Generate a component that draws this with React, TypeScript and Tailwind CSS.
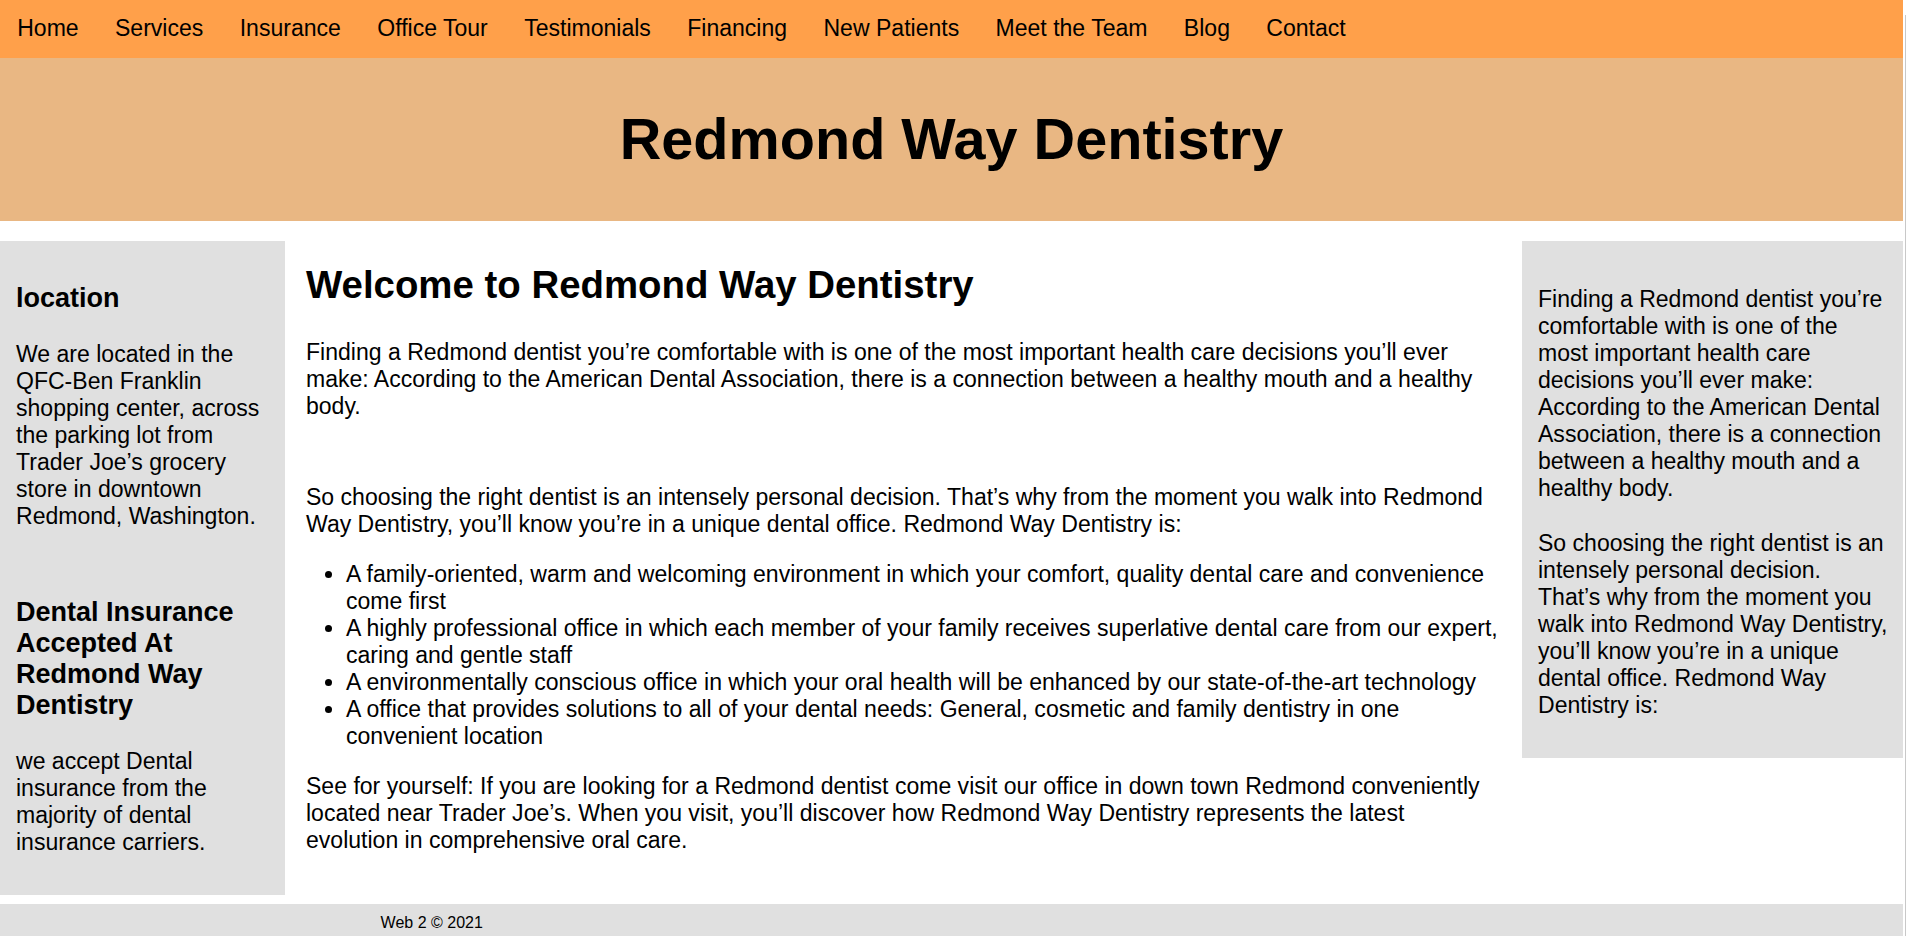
import React from "react";

const navItems = [
  "Home",
  "Services",
  "Insurance",
  "Office Tour",
  "Testimonials",
  "Financing",
  "New Patients",
  "Meet the Team",
  "Blog",
  "Contact",
];

export default function App() {
  return (
    <div className="flex w-[1906px] h-[936px] overflow-hidden bg-white text-black font-['Liberation_Sans',Arial,sans-serif]">
      <div className="w-[1903px] shrink-0 flex flex-col">
        <nav className="h-[58px] bg-[#FFA04A] flex items-start pt-[15px] pl-0 -ml-[1px]">
          {navItems.map((item) => (
            <a key={item} className="px-[18.2px] text-[23.04px] leading-[26px] whitespace-nowrap cursor-pointer">
              {item}
            </a>
          ))}
        </nav>
        <header className="h-[163px] bg-[#E9B783] flex items-center justify-center">
          <h1 className="text-[57.6px] font-bold leading-none">Redmond Way Dentistry</h1>
        </header>
        <div className="mt-[20px] flex items-start">
          <aside className="w-[285px] shrink-0 bg-[#E0E0E0] pl-4 pr-4 pt-[42px] pb-[38.5px]">
            <h3 className="text-[27px] font-bold leading-[31px]">location</h3>
            <p className="mt-[26.9px] text-[23.04px] leading-[27px]">
              We are located in the QFC-Ben Franklin shopping center, across the parking lot from Trader Joe’s grocery
              store in downtown Redmond, Washington.
            </p>
            <h3 className="mt-[66.7px] text-[27px] font-bold leading-[31px]">
              Dental Insurance Accepted At Redmond Way Dentistry
            </h3>
            <p className="mt-[27.6px] text-[23.04px] leading-[27px]">
              we accept Dental insurance from the majority of dental insurance carriers.
            </p>
          </aside>
          <main className="flex-1 pl-[21px] pr-[21px] pt-[22px]">
            <h2 className="text-[38.4px] font-bold leading-[44px]">Welcome to Redmond Way Dentistry</h2>
            <p className="mt-[31.5px] text-[23.04px] leading-[27px]">
              Finding a Redmond dentist you’re comfortable with is one of the most important health care decisions
              you’ll ever make: According to the American Dental Association, there is a connection between a healthy
              mouth and a healthy body.
            </p>
            <p className="mt-[64.5px] text-[23.04px] leading-[27px]">
              So choosing the right dentist is an intensely personal decision. That’s why from the moment you walk into
              Redmond Way Dentistry, you’ll know you’re in a unique dental office. Redmond Way Dentistry is:
            </p>
            <ul className="mt-[23px] list-disc pl-[40px] text-[23.04px] leading-[27px]">
              <li>
                A family-oriented, warm and welcoming environment in which your comfort, quality dental care and
                convenience come first
              </li>
              <li>
                A highly professional office in which each member of your family receives superlative dental care from
                our expert, caring and gentle staff
              </li>
              <li>
                A environmentally conscious office in which your oral health will be enhanced by our state-of-the-art
                technology
              </li>
              <li>
                A office that provides solutions to all of your dental needs: General, cosmetic and family dentistry in
                one convenient location
              </li>
            </ul>
            <p className="mt-[23px] text-[23.04px] leading-[27px]">
              See for yourself: If you are looking for a Redmond dentist come visit our office in down town Redmond
              conveniently located near Trader Joe’s. When you visit, you’ll discover how Redmond Way Dentistry
              represents the latest evolution in comprehensive oral care.
            </p>
          </main>
          <aside className="w-[381px] shrink-0 bg-[#E0E0E0] pl-4 pr-[14px] pt-[44.5px] pb-[39px]">
            <p className="text-[23.04px] leading-[27px]">
              Finding a Redmond dentist you’re comfortable with is one of the most important health care decisions
              you’ll ever make: According to the American Dental Association, there is a connection between a healthy
              mouth and a healthy body.
            </p>
            <p className="mt-[28.4px] text-[23.04px] leading-[27px]">
              So choosing the right dentist is an intensely personal decision. That’s why from the moment you walk into
              Redmond Way Dentistry, you’ll know you’re in a unique dental office. Redmond Way Dentistry is:
            </p>
          </aside>
        </div>
        <footer className="mt-auto h-[31.6px] bg-[#E0E0E0] pl-[20%] pt-[10px] text-[16px] leading-[18px]">
          Web 2 © 2021
        </footer>
      </div>
      <div className="w-[3px] shrink-0 flex justify-end pt-[15px]">
        <div className="w-px h-full bg-[#C8C8C8]" />
      </div>
    </div>
  );
}
